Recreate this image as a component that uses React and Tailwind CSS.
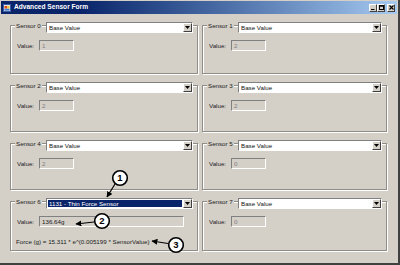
import React from 'react';

const sensors = [
  { id: 0, value: '1' },
  { id: 1, value: '2' },
  { id: 2, value: '2' },
  { id: 3, value: '2' },
  { id: 4, value: '2' },
  { id: 5, value: '0' },
  { id: 6, value: '136.64g', type: '1131 - Thin Force Sensor', active: true },
  { id: 7, value: '0' },
];

const Combo = ({ text, selected }) => (
  <div className="flex-1 h-[11px] flex bg-white border-t border-l border-t-[#808080] border-l-[#808080] border-b border-r border-b-white border-r-white">
    <div className={selected ? 'flex-1 flex items-center pl-[1px] m-[1px] bg-[#0a246a] text-white' : 'flex-1 flex items-center pl-[2px] text-[#111]'}>
      {text}
    </div>
    <div className="w-[9px] h-full bg-[#d4d0c8] border-t border-l border-t-white border-l-white border-b border-r border-b-[#404040] border-r-[#404040] flex items-center justify-center">
      <svg width="5" height="3" viewBox="0 0 5 3"><path d="M0 0H5L2.5 3Z" fill="#000" /></svg>
    </div>
  </div>
);

const ValueBox = ({ value, active }) => (
  <div className={`h-[11px] flex items-center pl-[2px] border-t border-l border-t-[#808080] border-l-[#808080] border-b border-r border-b-white border-r-white ${active ? 'w-[145px] text-[#1a1a1a]' : 'w-[35px] text-[#808080]'}`}>
    {value}
  </div>
);

const SensorGroup = ({ s }) => (
  <div className="pt-[3px] h-full">
    <div className="h-full border border-[#8f8d88] shadow-[inset_1px_1px_0_#fff,1px_1px_0_#fff]">
      <div className="flex items-start -mt-[4px] pl-[4px] pr-[4px]">
        <div className="w-[31px] flex">
          <span className="bg-[#d4d0c8] px-[1px] leading-[7px] text-[#1a1a1a]">Sensor {s.id}</span>
        </div>
        <Combo text={s.type || 'Base Value'} selected={s.active} />
      </div>
      <div className="flex items-center mt-[7px] pl-[6px]">
        <div className="w-[22px] text-[#1a1a1a]">Value:</div>
        <ValueBox value={s.value} active={s.active} />
      </div>
      {s.active && (
        <div className="mt-[11px] pl-[5px] text-[#1a1a1a] leading-[7px]">
          Force (g) = 15.311 * e^(0.005199 * SensorValue)
        </div>
      )}
    </div>
  </div>
);

const TitleButton = ({ children }) => (
  <div className="w-[8px] h-[8px] bg-[#d4d0c8] border-t border-l border-t-white border-l-white border-b border-r border-b-[#404040] border-r-[#404040] flex items-center justify-center">
    {children}
  </div>
);

const Callout = ({ cx, cy, n }) => (
  <g>
    <circle cx={cx} cy={cy} r="7.3" fill="#fff" stroke="#000" strokeWidth="1.6" />
    <text x={cx} y={cy + 3.3} textAnchor="middle" fontSize="9.5" fontWeight="bold" fontFamily="Liberation Sans, Arial, sans-serif" fill="#000">{n}</text>
  </g>
);

export default function App() {
  return (
    <div
      className="w-[400px] h-[265px] bg-[#d4d0c8] relative overflow-hidden border-r-[2px] border-b-[2px] border-r-[#404040] border-b-[#404040] text-[6.2px]"
      style={{ fontFamily: '"Liberation Sans", Arial, sans-serif' }}
    >
      {/* Title bar */}
      <div className="h-[13px] mx-[1px] mt-[1px] flex items-center bg-gradient-to-r from-[#0a246a] from-[20%] to-[#a6caf0] pl-[2px] pr-[2px]">
        <svg width="8" height="8" viewBox="0 0 8 8">
          <rect x="0" y="0" width="8" height="8" fill="#e8e4dc" />
          <rect x="0.5" y="0.5" width="7" height="7" fill="none" stroke="#3a5ea8" />
          <rect x="1.5" y="2" width="2.5" height="2.5" fill="#e04a1a" />
          <rect x="4.2" y="2" width="2.3" height="2.5" fill="#f2c230" />
          <rect x="1.5" y="4.8" width="5" height="1.8" fill="#3a7bd5" />
        </svg>
        <span className="ml-[3px] text-white font-bold text-[6.6px] leading-none">Advanced Sensor Form</span>
        <div className="ml-auto flex items-center">
          <TitleButton>
            <svg width="4" height="4" viewBox="0 0 4 4"><rect x="0" y="3" width="3.5" height="1" fill="#000" /></svg>
          </TitleButton>
          <TitleButton>
            <svg width="5" height="5" viewBox="0 0 5 5"><rect x="0.5" y="0.5" width="4" height="4" fill="none" stroke="#000" strokeWidth="1" /><rect x="0.5" y="0.5" width="4" height="1.2" fill="#000" /></svg>
          </TitleButton>
          <div className="w-[2px]" />
          <TitleButton>
            <svg width="5" height="5" viewBox="0 0 5 5"><path d="M0.5 0.5L4.5 4.5M4.5 0.5L0.5 4.5" stroke="#000" strokeWidth="1.1" /></svg>
          </TitleButton>
        </div>
      </div>

      {/* Sensor groups */}
      <div className="pt-[8px] pl-[10px] grid grid-cols-[188px_185px] grid-rows-[52px_50px_50px_53px] gap-x-[4px] gap-y-[8px]">
        {sensors.map((s) => (
          <SensorGroup key={s.id} s={s} />
        ))}
      </div>

      {/* Callouts */}
      <svg className="absolute inset-0 pointer-events-none" width="400" height="265" viewBox="0 0 400 265">
        <defs>
          <marker id="ah" viewBox="0 0 10 10" refX="9" refY="5" markerWidth="5" markerHeight="5" orient="auto">
            <path d="M0 0L10 5L0 10Z" fill="#000" />
          </marker>
        </defs>
        <line x1="115" y1="184" x2="107" y2="197" stroke="#000" strokeWidth="1.2" markerEnd="url(#ah)" />
        <line x1="94" y1="222" x2="76" y2="224" stroke="#000" strokeWidth="1.2" markerEnd="url(#ah)" />
        <line x1="168" y1="243.5" x2="152" y2="241" stroke="#000" strokeWidth="1.2" markerEnd="url(#ah)" />
        <Callout cx={120} cy={178} n="1" />
        <Callout cx={102} cy={221} n="2" />
        <Callout cx={176} cy={245} n="3" />
      </svg>
    </div>
  );
}
